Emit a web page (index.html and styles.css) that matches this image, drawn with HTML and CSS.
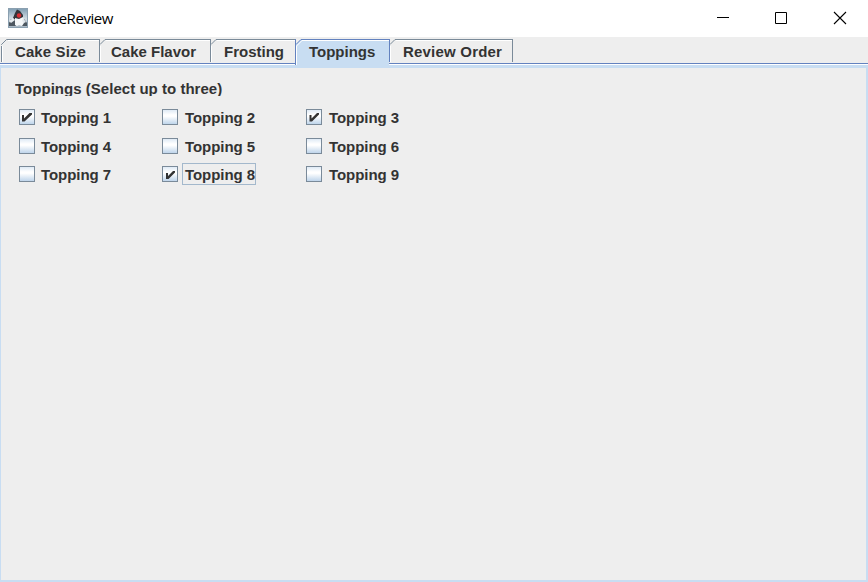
FILE: index.html
```html
<!DOCTYPE html>
<html lang="en">
<head>
<meta charset="utf-8">
<title>OrdeReview</title>
<link rel="stylesheet" href="styles.css">
</head>
<body>
<div class="window">
  <header class="titlebar">
    <svg class="app-icon" width="20" height="20" viewBox="0 0 20 20">
      <defs><linearGradient id="sky" x1="0" y1="0" x2="0" y2="1"><stop offset="0" stop-color="#7f9db2"/><stop offset=".55" stop-color="#d3dde4"/><stop offset="1" stop-color="#a5b5c2"/></linearGradient></defs>
      <rect x=".5" y=".5" width="19" height="19" fill="url(#sky)" stroke="#8ba0b0"/>
      <path d="M1 15l2-4 4 1 1 6H1zM12 13l4-2 3 4v3h-5z" fill="#4d5760"/>
      <path d="M9 1.500L7 5 5 10l2 2 4 1 4-2V7l-3-4z" fill="#34343a"/>
      <path d="M7 10l4 1 4-2 1 6-2 3-3-1-2 1-2-1z" fill="#f5f7f8"/>
      <path d="M5 10l-4 3 2 2 4-3zM15 10l3 4-2 1-2-2z" fill="#e4e9ed"/>
      <circle cx="11" cy="7.500" r="2.200" fill="#d92d32"/>
    </svg>
    <span class="title">OrdeReview</span>
    <svg class="controls" width="132" height="14" viewBox="0 0 132 14">
      <path d="M1 6.500h12M59.500 1.500h11v11h-11z" fill="none" stroke="#000"/>
      <path d="M118 1l12 12M130 1L118 13" fill="none" stroke="#000" stroke-width="1.100"/>
    </svg>
  </header>
  <nav class="tabs">
    <div class="tab first"><svg class="corner" width="7" height="7"><path d="M0 0h6L0 6z" fill="#eee"/><path d="M.5 6V5.500L5.500 .5H7" fill="none" stroke="#7a8a99"/></svg><span class="label l1">Cake Size</span></div>
    <div class="tab flavor"><svg class="corner joined" width="7" height="7"><path d="M.5 0V7M1 5.500L6 .5H7" fill="none" stroke="#7a8a99"/></svg><span class="label l2">Cake Flavor</span></div>
    <div class="tab frosting"><svg class="corner joined" width="7" height="7"><path d="M.5 0V7M1 5.500L6 .5H7" fill="none" stroke="#7a8a99"/></svg><span class="label l3">Frosting</span></div>
    <div class="tab selected"><svg class="corner" width="7" height="7"><path d="M0 0h6L0 6z" fill="#eee"/><path d="M.5 0V7M1 5.500L6 .5H7" fill="none" stroke="#6382bf"/><path d="M1.500 7L7 1.500" fill="none" stroke="#fff"/></svg><span class="label l4">Toppings</span></div>
    <div class="tab review"><svg class="corner joined" width="7" height="7"><path d="M1 5.500L6 .5H7" fill="none" stroke="#7a8a99"/><path d="M.5 0V7" stroke="#6382bf"/></svg><span class="label l5">Review Order</span></div>
  </nav>
  <main class="panel">
    <div class="heading"><span>Toppings (Select up to three)</span></div>
    <div class="options">
      <div class="option"><span class="box"><svg width="16" height="16"><path class="tick" d="M3 6h2v3.500L10.500 4H13v1.500L5.500 12.500H3z"/></svg></span><span class="name">Topping 1</span></div>
      <div class="option"><span class="box"></span><span class="name shifted">Topping 2</span></div>
      <div class="option"><span class="box"><svg width="16" height="16"><path class="tick" d="M3.500 6h2v3.500L11 4h2v1.500L6 12.500H3.500z"/></svg></span><span class="name shifted">Topping 3</span></div>
      <div class="option"><span class="box"></span><span class="name">Topping 4</span></div>
      <div class="option"><span class="box"></span><span class="name shifted">Topping 5</span></div>
      <div class="option"><span class="box"></span><span class="name shifted">Topping 6</span></div>
      <div class="option"><span class="box"></span><span class="name">Topping 7</span></div>
      <div class="option"><span class="box"><svg width="16" height="16"><path class="tick" d="M4 7h2v3l5-5h2v1.500L6.500 13H4z"/></svg></span><span class="name shifted focused">Topping 8</span></div>
      <div class="option"><span class="box"></span><span class="name shifted">Topping 9</span></div>
    </div>
  </main>
</div>
</body>
</html>
```
FILE: styles.css
```css
* { box-sizing: border-box; }
body { margin: 0; background: #eee; color: #333; font: bold 15px/18px "Liberation Sans", Arial, sans-serif; }
svg { display: block; }
.window { width: 868px; height: 582px; display: flex; flex-direction: column; overflow: hidden; }
.titlebar { height: 37px; background: #fff; display: flex; align-items: center; padding: 0 20px 0 8px; }
.app-icon { margin-top: -1px; }
.title { margin: -2px 0 0 5px; color: #000; font: 15px/20px "Open Sans", "Noto Sans", sans-serif; letter-spacing: -.45px; }
.controls { margin-left: auto; margin-top: -1px; }
.tabs { height: 28px; padding: 2px 0 0 1px; display: flex; background: linear-gradient(#6382bf, #6382bf) 0 26px / 100% 1px no-repeat, linear-gradient(#fff, #fff) 0 27px / 100% 1px no-repeat; }
.tab { position: relative; height: 23px; border-top: 1px solid #7a8a99; border-left: 1px solid #7a8a99; box-shadow: inset 1px 1px #fff; padding-top: 3px; }
.corner { position: absolute; left: -1px; top: -1px; background: #eee; }
.first { width: 98px; }
.flavor { width: 111px; }
.frosting { width: 85px; }
.selected { width: 94px; height: 26px; border-color: #6382bf; background: #c8ddf2; }
.selected .corner { background: #c8ddf2; }
.review { width: 124px; border-left-color: #6382bf; border-right: 1px solid #7a8a99; }
.label { display: block; white-space: nowrap; }
.l1 { margin-left: 13px; letter-spacing: .1px; }
.l2 { margin-left: 11px; }
.l3 { margin-left: 13px; }
.l4 { margin-left: 13px; }
.l5 { margin-left: 13px; letter-spacing: .2px; }
.panel { flex: 1; border: solid #c8ddf2; border-width: 3px 2px 2px 1px; padding: 12px 0 0 14px; }
.heading { height: 16px; overflow: hidden; white-space: nowrap; letter-spacing: .03px; }
.options { display: grid; grid-template-columns: 143px 144px 120px; grid-template-rows: 29px 28px 28px; padding-left: 4px; margin-top: 10px; }
.option { display: flex; align-items: flex-start; }
.box { width: 16px; height: 16px; margin-top: 3px; border: 1px solid #7a8a99; background: linear-gradient(#dfeaf5, #fff 35%, #fff 45%, #bfd5eb); }
.box svg { margin: -1px; }
.tick { fill: #333; }
.name { margin: 0 0 0 3px; width: 74px; height: 22px; padding: 2px 0 0 2px; border: 1px solid transparent; white-space: nowrap; letter-spacing: -.05px; }
.shifted { margin-left: 4px; }
.focused { border-color: #a3b8cc; }
```
